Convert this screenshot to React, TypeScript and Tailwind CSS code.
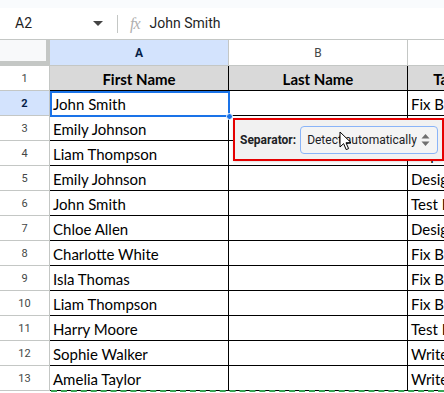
const rows: [string, string][] = [
  ['John Smith', 'Fix Bugs'],
  ['Emily Johnson', 'Review Code'],
  ['Liam Thompson', 'Deploy App'],
  ['Emily Johnson', 'Design UI'],
  ['John Smith', 'Test Features'],
  ['Chloe Allen', 'Design Logo'],
  ['Charlotte White', 'Fix Bugs'],
  ['Isla Thomas', 'Fix Bugs'],
  ['Liam Thompson', 'Fix Bugs'],
  ['Harry Moore', 'Test Login'],
  ['Sophie Walker', 'Write Docs'],
  ['Amelia Taylor', 'Write Tests'],
]

const cellFont = { fontFamily: 'Lato, "Open Sans", sans-serif' }

function Cursor() {
  return (
    <svg width="14" height="20" viewBox="0 0 14 20" className="absolute left-[339px] top-[131px]">
      <path d="M1 1 L1 16 L4.6 12.6 L7.2 18.6 L9.6 17.6 L7 11.8 L12 11.6 Z" fill="white" stroke="black" strokeWidth="1" strokeLinejoin="round" />
    </svg>
  )
}

function UpDown() {
  return (
    <svg width="9" height="14" viewBox="0 0 9 14" className="shrink-0">
      <path d="M4.5 1 L8.5 5.5 L0.5 5.5 Z M4.5 13 L8.5 8.5 L0.5 8.5 Z" fill="#6f6f6f" />
    </svg>
  )
}

export default function App() {
  return (
    <div className="relative w-[444px] h-[393px] overflow-hidden bg-white font-['Roboto',Arial,sans-serif]">
      {/* top strip */}
      <div className="h-[8px] bg-[#f9fbfd]" />

      {/* formula bar */}
      <div className="h-[32px] flex items-center border-b border-[#c4c7c5]">
        <div className="w-[117px] shrink-0 flex items-center pl-[15px] pr-[14px]">
          <span className="text-[14px] text-[#1f1f1f] flex-1">A2</span>
          <span className="w-0 h-0 border-l-[5px] border-r-[5px] border-t-[5px] border-l-transparent border-r-transparent border-t-[#444]" />
        </div>
        <div className="w-px h-[18px] bg-[#c4c7c5]" />
        <span className="ml-[12px] text-[16px] italic text-[#b0b0b0] font-['Liberation_Serif',serif] tracking-[-1px]">fx</span>
        <span className="ml-[10px] text-[14px] text-[#1f1f1f]">John Smith</span>
      </div>

      {/* column headers */}
      <div className="flex h-[26px] border-b border-[#c4c7c5]">
        <div className="w-[50px] shrink-0 flex flex-col">
          <div className="flex flex-1">
            <div className="flex-1 bg-[#f8f9fa]" />
            <div className="w-[4px] bg-[#c4c7c5]" />
          </div>
          <div className="h-[4px] bg-[#c4c7c5]" />
        </div>
        <div className="w-[179px] shrink-0 bg-[#d3e3fd] flex items-center justify-center pt-[1px] text-[12px] font-bold text-[#041e49] border-r border-[#c4c7c5]">A</div>
        <div className="w-[179px] shrink-0 flex items-center justify-center pt-[1px] text-[12px] text-[#444746] border-r border-[#c4c7c5]">B</div>
        <div className="flex-1" />
      </div>

      {/* row 1: headers */}
      <div className="flex h-[25px]">
        <div className="w-[50px] shrink-0 flex items-center justify-center pt-[2px] text-[11px] text-[#444746] border-r border-b border-[#c4c7c5]">1</div>
        <div style={cellFont} className="w-[179px] shrink-0 bg-[#d9d9d9] flex items-center justify-center pt-[2px] text-[15px] font-bold text-black border-r border-b border-black">First Name</div>
        <div style={cellFont} className="w-[179px] shrink-0 bg-[#d9d9d9] flex items-center justify-center pt-[2px] text-[15px] font-bold text-black border-r border-b border-black">Last Name</div>
        <div style={cellFont} className="w-[80px] shrink-0 bg-[#d9d9d9] flex items-center justify-center pt-[2px] text-[15px] font-bold text-black border-b border-black">Task</div>
      </div>

      {rows.map(([name, task], i) => {
        const n = i + 2
        const sel = n === 2
        return (
          <div key={n} className="flex h-[25px]">
            <div className={`w-[50px] shrink-0 flex items-center justify-center pt-[2px] text-[11px] border-r border-b border-[#c4c7c5] ${sel ? 'bg-[#d3e3fd] font-bold text-[#041e49]' : 'text-[#444746]'}`}>{n}</div>
            <div style={cellFont} className="w-[179px] shrink-0 flex items-center pl-[3px] pt-[3px] text-[15px] text-black border-r border-b border-black whitespace-nowrap overflow-hidden">{name}</div>
            <div className="w-[179px] shrink-0 border-r border-b border-black" />
            <div style={cellFont} className="w-[120px] shrink-0 flex items-center pl-[3px] pt-[3px] text-[15px] text-black border-b border-black whitespace-nowrap">{task}</div>
          </div>
        )
      })}

      {/* selection on A2 */}
      <div className="absolute left-[50px] top-[91px] w-[180px] h-[26px] border-2 border-[#1a73e8] pointer-events-none" />
      <div className="absolute left-[226px] top-[113px] w-[7px] h-[7px] rounded-full bg-[#1a73e8] border border-white" />

      {/* copy marquee */}
      <div className="absolute left-[51px] top-[390px] right-0 border-t-2 border-dashed border-[#3aa757]" />

      {/* separator popup */}
      <div className="absolute left-[233px] top-[118px] w-[211px] h-[43px] border-2 border-[#e50000] bg-[#f1f1f1] flex items-center pl-[5px] gap-[4px] shadow-sm">
        <span className="text-[12px] font-bold text-[#202124]">Separator:</span>
        <div className="w-[138px] shrink-0 h-[28px] rounded-[4px] border border-[#8ab4f8] bg-[#f4f4f4] flex items-center gap-[4px] pl-[6px] pr-[7px] text-[12px] text-[#202124]">
          <span className="flex-1 whitespace-nowrap overflow-hidden">Detect automatically</span>
          <UpDown />
        </div>
      </div>

      <Cursor />
    </div>
  )
}
